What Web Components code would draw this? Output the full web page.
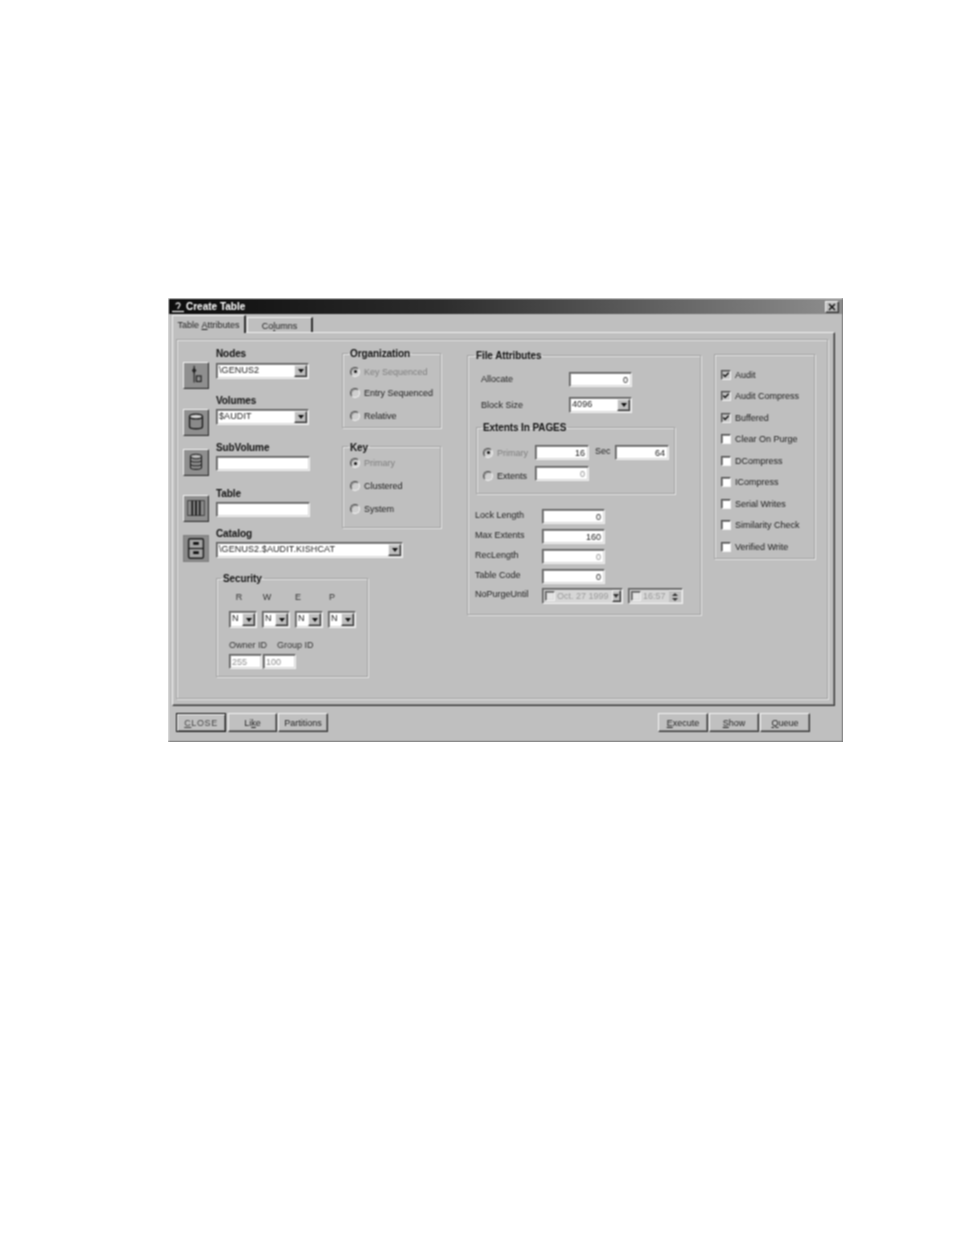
<!DOCTYPE html>
<html>
<head>
<meta charset="utf-8">
<title>Create Table</title>
<style>
html, body { margin: 0; background: #fff; }
body { padding: 298px 0 0 168px; height: 937px; overflow: hidden; font: 9px "Liberation Sans", Arial, sans-serif; color: #1a1a1a; }
</style>
</head>
<body>
<create-table-dialog></create-table-dialog>
<script>
const SUNKEN = `border: 1px solid; border-color: #5c5c5c #f2f2f2 #f2f2f2 #5c5c5c; box-shadow: inset 1px 1px #8c8c8c, inset -1px -1px #d8d8d8;`;
const RAISED = `border: 1px solid; border-color: #f2f2f2 #303030 #303030 #f2f2f2; box-shadow: inset -1px -1px #848484;`;

// Small base class, every control only supplies its css and markup
class WinElement extends HTMLElement {
    connectedCallback() {
        this.attachShadow({mode: 'open'});
        this.shadowRoot.innerHTML = `<style>${this.css()}</style>${this.html()}`;
    }
    attr(name, fallback = '') {
        return this.getAttribute(name) ?? fallback;
    }
    css() { return ''; }
    html() { return '<slot></slot>'; }
}

class WinGroup extends WinElement {
    css() {
        return `
:host { display: block; box-sizing: border-box; }
fieldset { box-sizing: border-box; height: 100%; margin: 0; min-width: 0; padding: 0; border: 1px solid #a2a2a2; box-shadow: 1px 1px #e4e4e4, inset 1px 1px #e4e4e4; }
legend { position: relative; top: 1px; margin-left: var(--legend-left, 5px); padding: 0 2px; font-size: 10px; font-weight: bold; line-height: 12px; letter-spacing: -.1px; color: #111; }
.body { display: flex; flex-direction: column; padding: var(--pad, 0); }
`;
    }
    html() {
        const label = this.attr('label');
        return `<fieldset>${label ? `<legend>${label}</legend>` : ''}<div class="body"><slot></slot></div></fieldset>`;
    }
}

class WinInput extends WinElement {
    css() {
        return `
:host { display: block; box-sizing: border-box; height: 15px; background: #fff; line-height: 13px; text-align: right; padding: 1px 3px 0; ${SUNKEN} }
:host([disabled]) { color: #8e8e8e; }
:host([left]) { text-align: left; padding-left: 2px; }
`;
    }
}

class WinCombo extends WinElement {
    css() {
        return `
:host { display: flex; box-sizing: border-box; height: 16px; background: #fff; line-height: 13px; padding-left: 2px; letter-spacing: .1px; ${SUNKEN} }
span { flex: 1; white-space: nowrap; overflow: hidden; }
b { box-sizing: border-box; display: flex; align-items: center; justify-content: center; width: 13px; margin: 1px; background: #c0c0c0; ${RAISED} }
b::after { content: ""; border: 3px solid transparent; border-top: 4px solid #111; border-bottom: 0; }
`;
    }
    html() {
        return `<span><slot></slot></span><b></b>`;
    }
}

class WinMark extends WinElement {
    // one radio button or check box with its caption
    css() {
        return `
:host { display: flex; align-items: center; gap: 4px; height: var(--row, 22px); white-space: nowrap; }
:host([disabled]) span { color: #7e7e7e; }
i { box-sizing: border-box; flex: none; display: flex; align-items: center; justify-content: center; width: 10px; height: 10px; background: #fff; border: 1px solid; border-color: #4c4c4c #f2f2f2 #f2f2f2 #4c4c4c; box-shadow: inset 1px 1px #909090; }
:host([radio]) i { border-radius: 50%; background: #cfcfcf; }
:host([radio]) i.on::after { content: ""; width: 3px; height: 3px; border-radius: 50%; background: #111; }
:host([grey]) i { background: #c8c8c8; }
svg { display: block; }
`;
    }
    html() {
        const on = this.hasAttribute('checked');
        const tick = on && !this.hasAttribute('radio') ? `<svg width="8" height="8" viewBox="0 0 9 9"><path d="M1.500 4l2 2.200L7.500 2" fill="none" stroke="#111" stroke-width="1.700"/></svg>` : '';
        return `<i class="${on ? 'on' : ''}">${tick}</i><span><slot></slot></span>`;
    }
}

class WinButton extends WinElement {
    css() {
        return `
:host { box-sizing: border-box; display: flex; align-items: center; justify-content: center; height: 19px; width: 50px; background: #c0c0c0; color: #222; ${RAISED} }
:host([default]) { border-color: #111; box-shadow: inset 1px 1px #f2f2f2, inset -1px -1px #7c7c7c; letter-spacing: .6px; color: #444; }
`;
    }
}

class ToolIcon extends WinElement {
    static glyphs = {
        node: `<path d="M11 3v18" stroke="#222" stroke-width="1.200"/><path d="M11 5l2.500 3L11 11 8.500 8z" fill="#222"/><rect x="13.500" y="14" width="5" height="6" fill="none" stroke="#222" stroke-width="1.300"/>`,
        volume: `<path d="M6 7v11c0 3 14 3 14 0V7" fill="#8a8a8a" stroke="#1c1c1c" stroke-width="1.500"/><ellipse cx="13" cy="7" rx="7" ry="2.600" fill="#d2d2d2" stroke="#1c1c1c" stroke-width="1.500"/>`,
        subvolume: `<path d="M7 7v12c0 2.600 12 2.600 12 0V7" fill="#8e8e8e" stroke="#222" stroke-width="1.200"/><ellipse cx="13" cy="7" rx="6" ry="2.400" fill="#bcbcbc" stroke="#222" stroke-width="1.200"/><path d="M7 11c0 2.600 12 2.600 12 0M7 15c0 2.600 12 2.600 12 0" fill="none" stroke="#222" stroke-width="1.200"/>`,
        table: `<rect x="4" y="5" width="18" height="16" fill="#8c8c8c" stroke="#3c3c3c" stroke-width="1"/><path d="M9 5v16M13 5v16M17 5v16" stroke="#1e1e1e" stroke-width="2"/>`,
        catalog: `<rect x="5" y="3" width="16" height="21" rx="1.500" fill="#a4a4a4" stroke="#1e1e1e" stroke-width="1.600"/><path d="M5 13.500h16" stroke="#1e1e1e" stroke-width="1.400"/><rect x="10" y="6.500" width="6" height="3" fill="#111"/><rect x="10" y="16.500" width="6" height="3" fill="#111"/>`,
    };
    css() {
        return `
:host { box-sizing: border-box; display: block; width: 26px; height: 27px; background: #8f8f8f; ${RAISED} }
:host([flat]) { border-color: #7e7e7e; box-shadow: none; background: #8b8b8b; }
svg { display: block; width: 24px; height: 25px; }
`;
    }
    html() {
        return `<svg viewBox="0 0 26 27">${ToolIcon.glyphs[this.attr('glyph')]}</svg>`;
    }
}

class WinField extends WinElement {
    // icon on the left, bold caption with its control on the right
    css() {
        return `
:host { display: grid; grid-template-columns: 26px auto; column-gap: 7px; align-content: start; justify-content: start; }
tool-icon { margin-top: var(--icon-top, 7px); }
label { display: block; font-size: 10px; font-weight: bold; line-height: 12px; letter-spacing: -.1px; color: #111; margin-bottom: var(--label-gap, 2px); }
`;
    }
    html() {
        const flat = this.attr('glyph') === 'catalog' ? 'flat' : '';
        return `<tool-icon glyph="${this.attr('glyph')}" ${flat}></tool-icon><div><label>${this.attr('label')}</label><slot></slot></div>`;
    }
}

class FormRow extends WinElement {
    // caption in a fixed width column followed by its control
    css() {
        return `
:host { display: grid; grid-template-columns: var(--cap, 67px) var(--ctl, 62px); align-items: center; height: var(--row, 20px); }
span { color: #222; margin-bottom: var(--cap-up, 0); white-space: nowrap; }
`;
    }
    html() {
        return `<span>${this.attr('label')}</span><div><slot></slot></div>`;
    }
}

class DateField extends WinElement {
    css() {
        return `
:host { box-sizing: border-box; display: flex; align-items: center; gap: 2px; height: 16px; background: #d6d6d6; color: #9a9a9a; padding-left: 2px; white-space: nowrap; ${SUNKEN} }
i { box-sizing: border-box; flex: none; width: 10px; height: 10px; background: #e4e4e4; ${SUNKEN} }
span { flex: 1; }
b { box-sizing: border-box; align-self: stretch; display: flex; align-items: center; justify-content: center; width: 13px; margin: 1px; background: #c0c0c0; ${RAISED} }
b::after { content: ""; border: 3px solid transparent; border-top: 4px solid #333; border-bottom: 0; }
.spin { align-self: stretch; display: flex; flex-direction: column; justify-content: center; gap: 2px; width: 13px; margin: 1px; background: #c0c0c0; border-top: 1px solid #eee; }
.spin u { width: 0; margin: 0 auto; border: 3px solid transparent; border-bottom: 3px solid #333; border-top: 0; }
.spin u + u { border-top: 3px solid #333; border-bottom: 0; }
`;
    }
    html() {
        const end = this.hasAttribute('spin') ? `<div class="spin"><u></u><u></u></div>` : `<b></b>`;
        return `<i></i><span><slot></slot></span>${end}`;
    }
}

class WinTabs extends WinElement {
    css() {
        return `
:host { display: flex; align-items: flex-end; height: 18px; padding-left: 3px; color: #222; }
div { box-sizing: border-box; display: flex; align-items: center; justify-content: center; white-space: pre; border: 1px solid #efefef; border-bottom: 0; border-right: 2px solid #303030; }
.active { width: 74px; height: 18px; margin-bottom: -1px; background: #bfbfbf; position: relative; z-index: 1; }
.other { width: 66px; height: 15px; margin-left: 1px; padding-top: 2px; }
`;
    }
    html() {
        return `<div class="active">Table <u>A</u>ttributes</div><div class="other">Co<u>l</u>umns</div>`;
    }
}

class FileAttributes extends WinElement {
    css() {
        return `
:host { display: block; }
win-group { width: 234px; height: 266px; margin-top: 1px; --pad: 11px 0 0 7px; --legend-left: 6px; }
.top { --cap: 88px; --ctl: 63px; padding-left: 6px; }
.allocate { --row: 15px; --cap-up: 2px; }
.block { --row: 16px; margin-top: 10px; }
.extents { width: 199px; height: 73px; margin: 8px 0 0 1px; --pad: 12px 0 0 6px; --legend-left: 4px; }
.line { display: flex; align-items: center; height: 15px; }
.line win-mark { width: 52px; --row: 15px; flex: none; }
.line + .line win-mark { margin-top: 5px; }
.line win-input { width: 54px; flex: none; }
.sec { margin: 0 0 3px 6px; width: 20px; color: #222; }
.line + .line { margin-top: 6px; }
.rows { margin-top: 12px; --cap: 67px; --ctl: 63px; }
.rows form-row { --cap-up: 2px; }
.date-row { display: flex; height: 16px; margin-top: 2px; }
.date-row span { width: 67px; color: #222; line-height: 12px; }
.date-row date-field:first-of-type { width: 81px; }
.date-row date-field + date-field { width: 55px; margin-left: 5px; }
`;
    }
    html() {
        return `
<win-group label="File Attributes">
  <div class="top">
    <form-row class="allocate" label="Allocate"><win-input>0</win-input></form-row>
    <form-row class="block" label="Block Size"><win-combo>4096</win-combo></form-row>
  </div>
  <win-group class="extents" label="Extents In PAGES">
    <div class="line">
      <win-mark radio checked disabled>Primary</win-mark>
      <win-input>16</win-input>
      <span class="sec">Sec</span>
      <win-input>64</win-input>
    </div>
    <div class="line">
      <win-mark radio>Extents</win-mark>
      <win-input disabled>0</win-input>
    </div>
  </win-group>
  <div class="rows">
    <form-row label="Lock Length"><win-input>0</win-input></form-row>
    <form-row label="Max Extents"><win-input>160</win-input></form-row>
    <form-row label="RecLength"><win-input disabled>0</win-input></form-row>
    <form-row label="Table Code"><win-input>0</win-input></form-row>
    <div class="date-row"><span>NoPurgeUntil</span><date-field>Oct. 27 1999</date-field><date-field spin>16:57</date-field></div>
  </div>
</win-group>`;
    }
}

class SecurityBox extends WinElement {
    css() {
        return `
:host { display: block; }
win-group { width: 152px; height: 105px; margin: -2px 0 0 33px; --pad: 6px 0 0 12px; --legend-left: 4px; }
.heads { display: flex; height: 14px; line-height: 14px; margin-left: 5px; color: #333; }
.heads span { width: 10px; text-align: center; }
.heads span + span { margin-left: 18px; }
.heads span + span + span { margin-left: 21px; }
.heads span + span + span + span { margin-left: 24px; }
.selects { display: grid; grid-template-columns: repeat(4, 28px); column-gap: 5px; margin-top: 7px; }
.selects win-combo { height: 17px; }
.ids { display: flex; gap: 10px; margin-top: 11px; height: 12px; line-height: 12px; color: #333; }
.vals { display: flex; gap: 1px; margin-top: 3px; }
.vals win-input { width: 33px; }
`;
    }
    html() {
        const select = '<win-combo>N</win-combo>';
        return `
<win-group label="Security">
  <div class="heads"><span>R</span><span>W</span><span>E</span><span>P</span></div>
  <div class="selects">${select.repeat(4)}</div>
  <div class="ids"><span>Owner ID</span><span>Group ID</span></div>
  <div class="vals"><win-input left disabled>255</win-input><win-input left disabled>100</win-input></div>
</win-group>`;
    }
}

class CreateTableDialog extends WinElement {
    css() {
        return `
:host { display: block; width: 675px; height: 444px; }
.window { box-sizing: border-box; display: flex; flex-direction: column; width: 675px; height: 444px; background: #bfbfbf; border: 1px solid; border-color: #dcdcdc #7a7a7a #7a7a7a #dcdcdc; filter: url(#scan-soft); }
.defs { display: block; width: 0; height: 0; }
.title { flex: none; display: flex; align-items: center; height: 15px; padding: 0 3px 0 2px; background: linear-gradient(90deg, #0c0c0c, #2c2c2c 40%, #8e8e8e); color: #fff; font-size: 10px; font-weight: bold; }
.title svg { margin-right: 1px; }
.title span { flex: 1; }
.close { box-sizing: border-box; display: flex; align-items: center; justify-content: center; width: 14px; height: 12px; background: #c0c0c0; ${RAISED} }
.panel { box-sizing: border-box; flex: none; height: 374px; margin: 0 7px 0 3px; border: 1px solid; border-color: #efefef #303030 #303030 #efefef; box-shadow: inset -1px -1px #848484; padding: 6px 6px 6px 3px; }
.groove { box-sizing: border-box; height: 100%; display: flex; padding: 8px 0 0 6px; border: 1px solid #a2a2a2; box-shadow: 1px 1px #e4e4e4, inset 1px 1px #e4e4e4; }
.left { flex: none; width: 258px; display: grid; grid-template-columns: 159px 99px; grid-template-rows: 180px 46px auto; align-content: start; }
.fields { display: flex; flex-direction: column; }
.orgs { display: flex; flex-direction: column; gap: 13px; margin-top: -1px; }
.org { height: 81px; --pad: 2px 0 0 7px; --row: 21px; }
.org win-mark:last-child { margin-top: 2px; }
.key { height: 88px; --pad: 0 0 0 7px; --row: 23px; }
.key win-mark:first-child { margin-top: -1px; }
.catalog { grid-column: 1 / 3; }
.security { grid-column: 1 / 3; }
file-attributes { margin-left: 26px; flex: none; }
.flags { width: 101px; height: 205px; margin: 6px 0 0 13px; --pad: 9px 0 0 6px; --row: 21.500px; }
.footer { flex: 1; display: flex; padding: 7px 0 0 7px; }
.spacer { width: 330px; }
.footer win-button + win-button { margin-left: 1px; }
.footer .like { width: 49px; margin-left: 2px; }
`;
    }
    html() {
        return `
<svg class="defs"><filter id="scan-soft" x="0" y="0" width="100%" height="100%" color-interpolation-filters="sRGB"><feConvolveMatrix order="3" divisor="16" preserveAlpha="true" edgeMode="duplicate" kernelMatrix="1 2 1 2 4 2 1 2 1"/></filter></svg>
<div class="window">
<div class="title">
  <svg width="14" height="12" viewBox="0 0 14 12"><path d="M1 10.500h12" stroke="#fff" stroke-width="1.200"/><path d="M5 3.500c0-2 4-2 4 0S7 5.500 7 8" fill="none" stroke="#ddd" stroke-width="1.300"/></svg>
  <span>Create Table</span>
  <div class="close"><svg width="8" height="8" viewBox="0 0 8 8"><path d="M1 1l6 6M7 1L1 7" stroke="#111" stroke-width="1.500"/></svg></div>
</div>
<win-tabs></win-tabs>
<div class="panel">
  <div class="groove">
    <div class="left">
      <div class="fields">
        <win-field glyph="node" label="Nodes" style="height:47px;--icon-top:14px;--label-gap:3px"><win-combo style="width:93px">\\GENUS2</win-combo></win-field>
        <win-field glyph="volume" label="Volumes" style="height:47px;--icon-top:14px;--label-gap:2px"><win-combo style="width:93px">$AUDIT</win-combo></win-field>
        <win-field glyph="subvolume" label="SubVolume" style="height:46px;--label-gap:2px"><win-input style="width:94px"></win-input></win-field>
        <win-field glyph="table" label="Table" style="height:40px;--label-gap:2px"><win-input style="width:94px"></win-input></win-field>
      </div>
      <div class="orgs">
        <win-group class="org" label="Organization">
          <win-mark radio checked disabled>Key Sequenced</win-mark>
          <win-mark radio>Entry Sequenced</win-mark>
          <win-mark radio>Relative</win-mark>
        </win-group>
        <win-group class="key" label="Key">
          <win-mark radio checked disabled>Primary</win-mark>
          <win-mark radio>Clustered</win-mark>
          <win-mark radio>System</win-mark>
        </win-group>
      </div>
      <win-field class="catalog" glyph="catalog" label="Catalog" style="--label-gap:2px"><win-combo style="width:187px">\\GENUS2.$AUDIT.KISHCAT</win-combo></win-field>
      <security-box class="security"></security-box>
    </div>
    <file-attributes></file-attributes>
    <win-group class="flags">
      <win-mark checked grey>Audit</win-mark>
      <win-mark checked grey>Audit Compress</win-mark>
      <win-mark checked grey>Buffered</win-mark>
      <win-mark>Clear On Purge</win-mark>
      <win-mark>DCompress</win-mark>
      <win-mark>ICompress</win-mark>
      <win-mark>Serial Writes</win-mark>
      <win-mark>Similarity Check</win-mark>
      <win-mark>Verified Write</win-mark>
    </win-group>
  </div>
</div>
<div class="footer">
  <win-button default><u>C</u>LOSE</win-button>
  <win-button class="like">Li<u>k</u>e</win-button>
  <win-button>Partitions</win-button>
  <div class="spacer"></div>
  <win-button><u>E</u>xecute</win-button>
  <win-button><u>S</u>how</win-button>
  <win-button><u>Q</u>ueue</win-button>
</div>
</div>`;
    }
}

customElements.define('win-group', WinGroup);
customElements.define('win-input', WinInput);
customElements.define('win-combo', WinCombo);
customElements.define('win-mark', WinMark);
customElements.define('win-button', WinButton);
customElements.define('tool-icon', ToolIcon);
customElements.define('win-field', WinField);
customElements.define('form-row', FormRow);
customElements.define('date-field', DateField);
customElements.define('win-tabs', WinTabs);
customElements.define('file-attributes', FileAttributes);
customElements.define('security-box', SecurityBox);
customElements.define('create-table-dialog', CreateTableDialog);
</script>
</body>
</html>
